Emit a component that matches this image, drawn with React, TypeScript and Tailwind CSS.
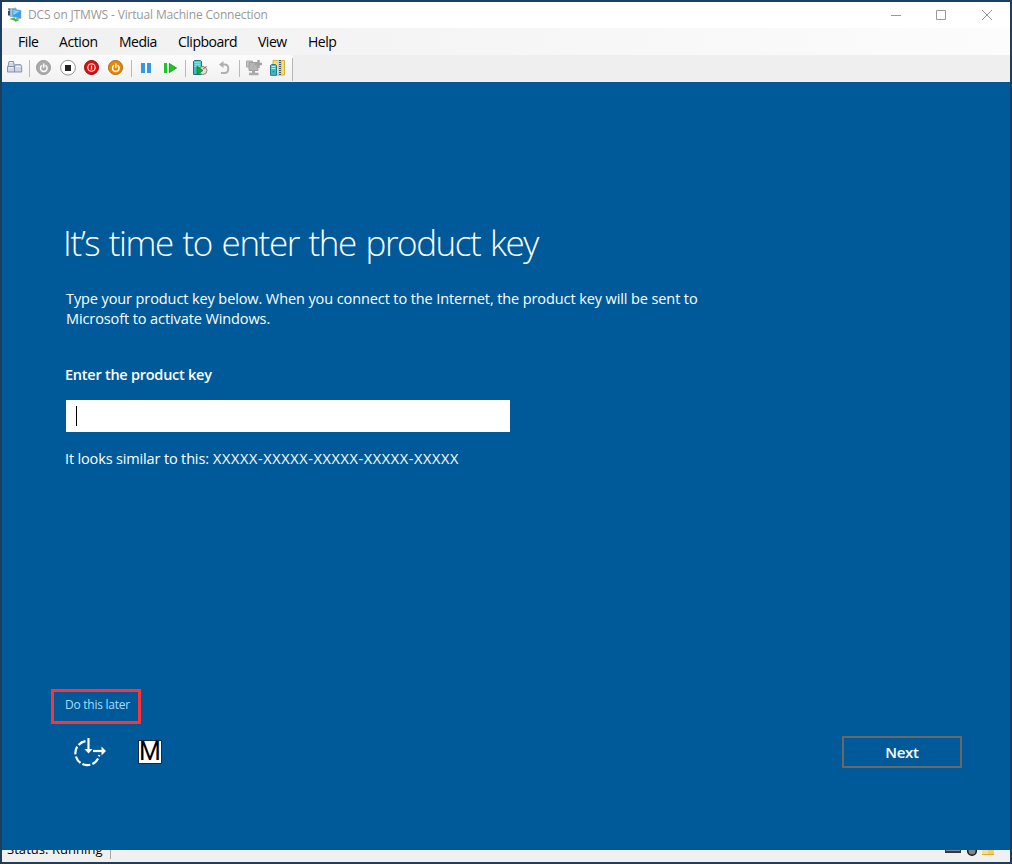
import type { ReactNode } from "react";

function Icon({ children }: { children: ReactNode }) {
  return (
    <svg width="16" height="16" viewBox="0 0 16 16" className="block shrink-0 overflow-visible">
      {children}
    </svg>
  );
}

function Separator() {
  return <div className="h-[17px] w-px shrink-0 bg-[#b9b9b9]" />;
}

function PowerGlyph() {
  return (
    <g fill="none" stroke="#fff" strokeWidth="1.4" strokeLinecap="round">
      <path d="M5.7 5.6a3.3 3.3 0 1 0 4.2 0" />
      <path d="M7.8 3.9v3.6" />
    </g>
  );
}

function VmIcon() {
  return (
    <svg width="16" height="16" viewBox="0 0 16 16" className="-mt-px block shrink-0">
      <path d="M1 1.500h2.500v7H1z" fill="#3c4650" />
      <path d="M1 2.500h1.500v1.500H1z" fill="#c8d2da" />
      <path d="M3 2l6-1v8l-6 .5z" fill="#8fd0f4" stroke="#5c7f98" strokeWidth=".5" />
      <path d="M5.500 2l8.500 1.500v8l-8.500-2z" fill="#35a0e4" stroke="#8a9aa5" strokeWidth=".5" />
      <path d="M6.300 3l6.500 1.200-6.500 4z" fill="#7fd2fb" />
      <path d="M2.500 12l5-1.800.3 1.300 4.800 1.500-4.200 1.700-1.200-1.200z" fill="#3fb554" />
      <path d="M9 10.700l3.600.8-.3 1-3-.8z" fill="#8b9299" />
    </svg>
  );
}

function KeysIcon() {
  return (
    <Icon>
      <g fill="#cdd6e6" stroke="#8590aa" strokeWidth="1">
        <path d="M1 6.500l1-5h4.500l1 5z" />
        <path d="M.5 6.500h7v5.500h-7z" />
        <path d="M7.500 6.500l.7-1.800h5.600l.9 1.800V12H7.500z" />
      </g>
      <path d="M2.500 2.700h3M1.500 7.800h4.500M9 6.500h4.500" stroke="#f0f4fb" />
    </Icon>
  );
}

function ServerPlayIcon() {
  return (
    <Icon>
      <path d="M1.500 1.500l1-1h6l1 1v13h-8z" fill="#43b9c2" stroke="#197983" />
      <path d="M2.500 2.200h6M2.500 4.200h6M2.500 6.200h6" stroke="#9bf0f3" />
      <circle cx="11" cy="10.500" r="4" fill="#dededc" stroke="#77716c" strokeWidth=".8" />
      <path d="M11 9l3.500-2.500" stroke="#c55546" />
      <path d="M5 6l6 4.500L5 15z" fill="#13a83b" stroke="#087424" strokeWidth=".6" />
    </Icon>
  );
}

function MonitorIcon() {
  return (
    <Icon>
      <path d="M.5 1h6v6h-6z" fill="#c2c2c2" stroke="#a8a8a8" />
      <path d="M3 2.500h9v8H3z" fill="#b4b4b4" stroke="#a0a0a0" />
      <path d="M12.500 0v8M8.500 4h7.500" stroke="#a2a2a2" strokeWidth="2.500" />
      <path d="M7.500 10.500v3" stroke="#a8a8a8" strokeWidth="3" />
      <path d="M3 14h9.500" stroke="#aaa" strokeWidth="2.500" />
    </Icon>
  );
}

function ServerZipIcon() {
  return (
    <Icon>
      <path d="M3 .5h11.500V15H3z" fill="#f2dc80" stroke="#d4b23e" />
      <path d="M8 0h4v15.500H8z" fill="#c9cacb" />
      <path d="M10 0v16" stroke="#555" strokeWidth="2" strokeDasharray="1 1" />
      <path d="M.5 5.500l1-1h4l1 1v9.800h-6z" fill="#43b9c2" stroke="#217f8b" />
      <path d="M1.500 6.500h4M1.500 8.500h4" stroke="#a4f1f4" />
      <path d="M2.500 11.800h2" stroke="#167381" />
    </Icon>
  );
}

function TitleBar() {
  return (
    <header className="flex h-[26px] shrink-0 items-center bg-white pl-[5px] text-[#999]">
      <VmIcon />
      <span className="-mt-px ml-[5px] text-[12px] leading-6 tracking-[-0.16px] whitespace-nowrap">
        DCS on JTMWS - Virtual Machine Connection
      </span>
      <svg width="104" height="12" viewBox="0 0 104 12" className="mr-[16px] -mt-[3px] ml-auto block" fill="none" stroke="#999">
        <path d="M1 7.500h10" />
        <path d="M46.500 2.500h9v9h-9z" />
        <path d="M92 2l10 10M102 2L92 12" />
      </svg>
    </header>
  );
}

function MenuBar() {
  return (
    <nav className="flex h-[27px] shrink-0 items-center bg-gradient-to-r from-[#f0f0f0] to-[#fcfcfc] pl-4 text-[14px] leading-5 whitespace-nowrap text-black">
      <span className="w-[41px] tracking-[-0.4px]">File</span>
      <span className="w-[60px] tracking-[-0.4px]">Action</span>
      <span className="w-[59px] tracking-[-0.5px]">Media</span>
      <span className="w-[80px] tracking-[-0.5px]">Clipboard</span>
      <span className="w-[50px] tracking-[-0.5px]">View</span>
      <span className="tracking-[-0.5px]">Help</span>
    </nav>
  );
}

function ToolBar() {
  return (
    <div className="flex h-[27px] shrink-0 bg-[#efefef]">
      <div className="flex h-[27px] w-[291px] items-center rounded-tr-[3px] bg-gradient-to-b from-[#fcfcfc] to-[#f1f1f1] pb-px pl-[5px]">
        <KeysIcon />
        <div className="mr-[6px] ml-[6px]"><Separator /></div>
        <div className="flex gap-2">
          <Icon>
            <circle cx="7.500" cy="7.500" r="7" fill="#aaa" stroke="#999" />
            <PowerGlyph />
          </Icon>
          <Icon>
            <circle cx="8" cy="7.700" r="7.400" fill="#fff" stroke="#929292" />
            <path d="M5 5h6v6H5z" fill="#222" />
          </Icon>
          <Icon>
            <circle cx="7.500" cy="7.500" r="7" fill="#d91010" stroke="#8f0d12" />
            <circle cx="7.500" cy="7.500" r="3.700" fill="none" stroke="#fff" strokeWidth="1.100" />
            <path d="M7.500 5.500v4" stroke="#fff" strokeWidth="1.300" />
          </Icon>
          <Icon>
            <circle cx="7.500" cy="7.500" r="7" fill="#e98800" stroke="#a56a18" />
            <PowerGlyph />
          </Icon>
        </div>
        <div className="mr-[6px] ml-[7px]"><Separator /></div>
        <div className="flex gap-2">
          <Icon>
            <path d="M3 3h4v10H3zM9 3h4v10H9z" fill="#3995e8" />
          </Icon>
          <Icon>
            <path d="M2 3h3v10H2zM7 3l8 5-8 5z" fill="#1fc427" />
            <path d="M7.400 3.600l7 4.400-7 4.400z" fill="none" stroke="#16a51f" strokeWidth=".8" />
          </Icon>
        </div>
        <div className="mr-[6px] ml-[7px]"><Separator /></div>
        <div className="flex gap-2">
          <ServerPlayIcon />
          <Icon>
            <path d="M6 4.500h2.500c5 0 5 8.500 0 8.500H5" fill="none" stroke="#b0b0b0" strokeWidth="2" />
            <path d="M3 4.500l4.500-3.500v7z" fill="#b0b0b0" />
          </Icon>
        </div>
        <div className="mr-[6px] ml-[7px]"><Separator /></div>
        <div className="flex gap-2">
          <MonitorIcon />
          <ServerZipIcon />
        </div>
        <div className="mt-[3px] ml-[6px] h-[23px] w-px shrink-0 bg-[#b5b5b5]" />
      </div>
    </div>
  );
}

function EaseOfAccessIcon() {
  return (
    <svg width="34" height="30" viewBox="0 0 34 30" className="block" fill="none" stroke="#fff" strokeWidth="2.2">
      <path d="M12.500 3.200A12 12 0 1 0 26.200 17" strokeDasharray="8 2.200" />
      <path d="M15.500 0v12" />
      <path d="M11.500 11h8l-4 4.500z" fill="#fff" stroke="none" />
      <path d="M20 13h10" />
      <path d="M28.500 8.500l4.500 4.500-4.500 4.500z" fill="#fff" stroke="none" />
    </svg>
  );
}

function SetupScreen() {
  return (
    <main className="flex h-[768px] shrink-0 flex-col bg-[#005a9a] pl-[62px] text-white">
      <h1 className="mt-[136px] -ml-px h-[50px] text-[35px] leading-[50px] font-light tracking-[-1.430px] whitespace-nowrap [word-spacing:2px]">
        It’s time to enter the product key
      </h1>
      <p className="mt-[21px] ml-[2px] text-[14.500px] leading-5 tracking-[-0.1px] whitespace-nowrap">
        <span>Type your product key below. When you connect to the Internet, the product key will be sent to</span>
        <br />
        <span>Microsoft to activate Windows.</span>
      </p>
      <label className="mt-[36px] ml-px text-[14.500px] leading-5 font-semibold tracking-[-0.250px] whitespace-nowrap">
        Enter the product key
      </label>
      <div className="mt-[15px] ml-[2px] flex h-8 w-[444px] items-center bg-white pl-[10px]">
        <div className="h-5 w-px bg-black" />
      </div>
      <p className="mt-[17px] ml-px flex text-[14.500px] leading-5 whitespace-nowrap">
        <span className="w-[148px] tracking-[-0.150px]">It looks similar to this: </span>
        <span className="tracking-[0.620px]">XXXXX-XXXXX-XXXXX-XXXXX-XXXXX</span>
      </p>
      <div className="mt-[220px] -ml-[13px] flex h-[35px] w-[90px] items-center border-[3px] border-[#ff3237] pb-[3px] pl-[11px] text-[12px] whitespace-nowrap text-[#a6dcff]">
        <span className="tracking-[-0.250px]">Do this later</span>
      </div>
      <div className="mt-[12px] flex h-8">
        <div className="mt-[2px] ml-[9px]"><EaseOfAccessIcon /></div>
        <div className="mt-[4px] ml-[31px] flex h-6 w-6 items-center justify-center border border-[#0c2c47] bg-white text-[25px] leading-[24px] text-black [font-family:Roboto,sans-serif]">
          M
        </div>
        <button className="mr-[48px] ml-auto flex h-8 w-[120px] items-center justify-center border-2 border-[#6b6868] text-[15px] leading-5 font-semibold tracking-[-0.300px]">
          <span>Next</span>
        </button>
      </div>
    </main>
  );
}

function StatusBar() {
  return (
    <footer className="flex h-[12px] shrink-0 items-start overflow-hidden bg-[#f0f0f0] pl-[5px] text-black">
      <span className="-mt-[11px] w-[103px] text-[13px] leading-5 tracking-[0.05px] whitespace-nowrap">Status: Running</span>
      <div className="h-[9px] w-px bg-[#a5a5a5]" />
      <svg width="50" height="7" viewBox="0 0 50 7" className="mr-[15px] ml-auto block">
        <path d="M0 0h16v3H0z" fill="#303943" />
        <path d="M1 .5h14" stroke="#7d8992" />
        <circle cx="27" cy="1" r="4.300" fill="#858585" stroke="#14191e" strokeWidth="1.500" />
        <path d="M37 0h12v5H37z" fill="#f8ce61" />
        <path d="M37 0h6v4h-6z" fill="#f3dda0" />
        <path d="M37 4.500h12" stroke="#dea633" />
      </svg>
    </footer>
  );
}

export default function App() {
  return (
    <div className="flex h-[864px] w-[1012px] flex-col overflow-hidden border-2 border-[#1c3f5f] [font-family:'Open_Sans','Noto_Sans',sans-serif]">
      <TitleBar />
      <MenuBar />
      <ToolBar />
      <SetupScreen />
      <StatusBar />
    </div>
  );
}
